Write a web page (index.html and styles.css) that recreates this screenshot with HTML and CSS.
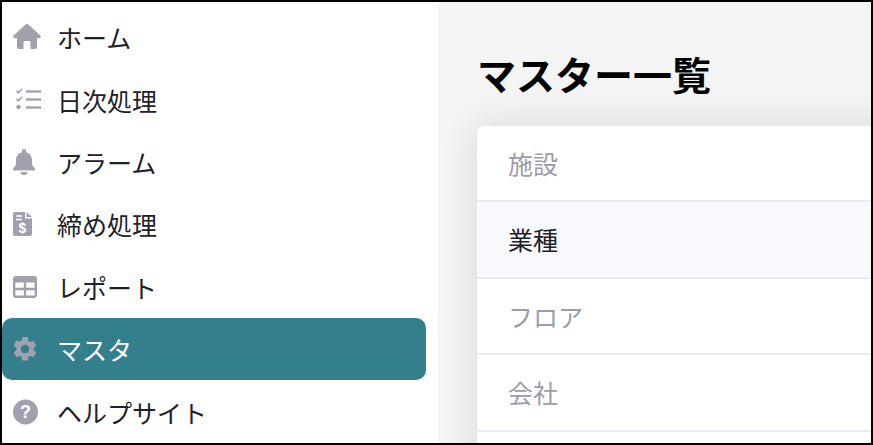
FILE: index.html
```html
<!DOCTYPE html>
<html lang="ja">
<head>
  <meta charset="UTF-8">
  <meta name="viewport" content="width=device-width, initial-scale=1.0">
  <title>マスター一覧</title>
  <link rel="stylesheet" href="styles.css">
</head>
<body>
  <div class="frame">
    <nav class="sidebar">
      <a class="nav-item">
        <svg class="nav-icon" viewBox="0 0 28 28"><path d="M12.6 1.6a2 2 0 0 1 2.8 0L27.3 12.6c1.2 1.1.5 2.6-1 2.6H24v9c0 1.1-.9 1.8-2 1.8h-4.5v-6.5c0-.8-.6-1.4-1.4-1.4h-4.2c-.8 0-1.4.6-1.4 1.4V26H6c-1.1 0-2-.7-2-1.8v-9H1.7c-1.500 0-2.200-1.500-1-2.600z"/></svg>
        <span>ホーム</span>
      </a>
      <a class="nav-item">
        <svg class="nav-icon" viewBox="0 0 28 28"><path class="thin" d="M3.5 5l1.8 1.8L9 3M3.5 13l1.8 1.8L9 11"/><circle cx="5.5" cy="21" r="2.2"/><path class="line" d="M13 5.500h15M13 13.500h15M13 21.500h15"/></svg>
        <span>日次処理</span>
      </a>
      <a class="nav-item">
        <svg class="nav-icon" viewBox="0 0 28 28"><path d="M11 1a2 2 0 0 1 2 2v1.200c3.800 1 6 4 6 8v3.500c0 1.500 1.200 3 2.500 4.300.6.600.8 1 .5 1.700-.2.500-.7.800-1.300.8H1.300c-.6 0-1.100-.3-1.300-.8-.3-.7-.1-1.100.5-1.700C1.800 18.700 3 17.200 3 15.700v-3.500c0-4 2.200-7 6-8V3a2 2 0 0 1 2-2z"/><path d="M7.500 24h7a3.500 3 0 0 1-7 0z"/></svg>
        <span>アラーム</span>
      </a>
      <a class="nav-item">
        <svg class="nav-icon" viewBox="0 0 28 28"><path d="M2 2h10v6.500h7V24a2 2 0 0 1-2 2H2a2 2 0 0 1-2-2V4a2 2 0 0 1 2-2z"/><path d="M13.500 2.200L19 7h-5.500z"/><path class="cut" d="M3 6h6M3 9.500h6"/><text class="dollar" x="9.500" y="22.500">$</text></svg>
        <span>締め処理</span>
      </a>
      <a class="nav-item">
        <svg class="nav-icon" viewBox="0 0 28 28"><path fill-rule="evenodd" d="M3 3h18a3 3 0 0 1 3 3v16a3 3 0 0 1-3 3H3a3 3 0 0 1-3-3V6a3 3 0 0 1 3-3zm-.6 6.500v5.300h8.400V9.500zm10.800 0v5.300h8.400V9.500zM2.400 17.200v5.400h8.400v-5.400zm10.800 0v5.400h8.400v-5.400z"/></svg>
        <span>レポート</span>
      </a>
      <a class="nav-item active">
        <svg class="nav-icon" viewBox="0 0 28 28"><path transform="translate(-2.400 -.4) scale(1.200)" d="M19.140 12.940c.04-.3.060-.61.060-.94s-.02-.64-.07-.94l2.030-1.580a.49.49 0 0 0 .12-.61l-1.920-3.320a.49.49 0 0 0-.59-.22l-2.390.96a7 7 0 0 0-1.620-.94l-.36-2.540A.48.48 0 0 0 13.920 2h-3.840a.47.47 0 0 0-.47.410l-.36 2.540a7.200 7.200 0 0 0-1.620.94l-2.390-.96a.48.48 0 0 0-.59.220L2.740 8.870a.47.47 0 0 0 .12.610l2.030 1.580c-.05.3-.09.63-.09.94s.02.640.07.940l-2.030 1.580a.49.49 0 0 0-.12.610l1.920 3.320c.12.220.37.290.59.220l2.390-.96c.5.380 1.030.7 1.620.94l.36 2.540c.05.240.24.410.48.410h3.840c.24 0 .44-.17.470-.41l.36-2.540a7 7 0 0 0 1.620-.94l2.390.96c.22.080.47 0 .59-.22l1.920-3.320a.47.47 0 0 0-.12-.61zM12 15.600a3.600 3.600 0 1 1 0-7.200 3.600 3.600 0 0 1 0 7.200z"/></svg>
        <span>マスタ</span>
      </a>
      <a class="nav-item">
        <svg class="nav-icon" viewBox="0 0 28 28"><circle cx="12.500" cy="14" r="12.500"/><text class="question" x="12.500" y="20">?</text></svg>
        <span>ヘルプサイト</span>
      </a>
    </nav>
    <main class="content">
      <h1>マスター一覧</h1>
      <div class="card">
        <div class="row">施設</div>
        <div class="row current">業種</div>
        <div class="row">フロア</div>
        <div class="row">会社</div>
        <div class="row"></div>
      </div>
    </main>
  </div>
</body>
</html>
```
FILE: styles.css
```css
* {
  box-sizing: border-box;
}
html, body {
  margin: 0;
  height: 100%;
  overflow: hidden;
}
body {
  font-family: "Noto Sans CJK JP", "Noto Sans", sans-serif;
  background: #fff;
}
.frame {
  display: flex;
  height: 100vh;
  border: 2px solid #000;
  overflow: hidden;
}
.sidebar {
  width: 436px;
  flex-shrink: 0;
  padding: 4px 12px 0 0;
  background: #fff;
}
.nav-item {
  display: flex;
  align-items: center;
  height: 62.4px;
  padding-left: 11px;
  font-size: 25px;
  color: #1d2129;
  border-radius: 10px;
}
.nav-item.active {
  background: #337f8c;
  color: #fff;
}
.nav-icon {
  width: 28px;
  height: 28px;
  margin-right: 16px;
  flex-shrink: 0;
  fill: #a0a1ac;
  overflow: visible;
}
.thin {
  fill: none;
  stroke: #a0a1ac;
  stroke-width: 1.7;
}
.line {
  fill: none;
  stroke: #a5a6b1;
  stroke-width: 2.3;
}
.cut {
  fill: none;
  stroke: #fff;
  stroke-width: 1.4;
}
.dollar, .question {
  fill: #fff;
  font-family: "Liberation Sans", sans-serif;
  font-weight: 700;
  text-anchor: middle;
}
.dollar {
  font-size: 14px;
}
.question {
  font-size: 18px;
}
.content {
  flex: 1;
  min-width: 0;
  padding: 48px 0 0 39px;
  background: #f4f4f5;
}
h1 {
  margin: 0 0 29.5px;
  font-size: 39px;
  line-height: 46px;
  font-weight: 700;
  color: #000;
}
.card {
  margin-right: -40px;
  background: #fff;
  border-radius: 7px;
  box-shadow: 0 0 36px rgba(0, 0, 0, 0.12);
}
.row {
  height: 76.5px;
  display: flex;
  align-items: center;
  padding-left: 31px;
  font-size: 25px;
  color: #9a9cab;
  border-bottom: 2px solid #e9eaf3;
}
.row.current {
  background: #f8f9fd;
  color: #1d2129;
}
```
